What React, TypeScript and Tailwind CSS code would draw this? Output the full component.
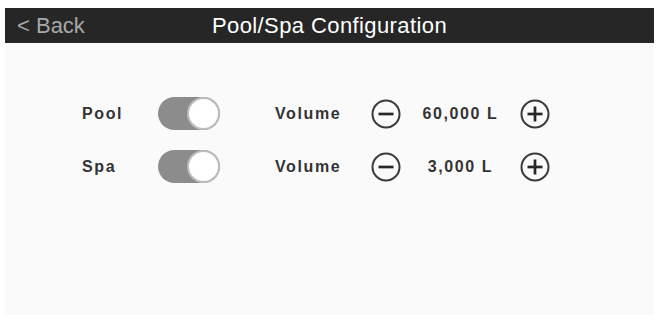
import React from 'react';

function Toggle() {
  return (
    <div className="relative w-[62px] h-[33px] rounded-full bg-[#8c8c8c]">
      <div className="absolute right-0 top-0 w-[33px] h-[33px] rounded-full bg-white border-2 border-[#bdbdbd]" />
    </div>
  );
}

function RoundBtn({ plus }: { plus?: boolean }) {
  return (
    <svg width="30" height="30" viewBox="0 0 30 30" className="shrink-0">
      <circle cx="15" cy="15" r="13.5" fill="none" stroke="#3a3a3a" strokeWidth="2" />
      <line x1="7.5" y1="15" x2="22.5" y2="15" stroke="#262626" strokeWidth="2.7" />
      {plus && <line x1="15" y1="7.5" x2="15" y2="22.5" stroke="#262626" strokeWidth="2.7" />}
    </svg>
  );
}

const rows = [
  { name: 'Pool', volume: '60,000 L' },
  { name: 'Spa', volume: '3,000 L' },
];

export default function App() {
  return (
    <div className="w-[659px] h-[315px] bg-white pt-[8px] px-[5px]" style={{ fontFamily: '"Liberation Sans", Arial, sans-serif' }}>
      <div className="h-[307px] w-[649px] bg-[#fafafa] flex flex-col">
        <div className="relative h-[35px] bg-[#262626] flex items-center justify-center">
          <span className="absolute left-[12px] text-[22px] text-[#a8a8a8]">&lt; Back</span>
          <span className="text-[22px] text-white tracking-[0.4px]">Pool/Spa Configuration</span>
        </div>

        <div className="mt-[54px] flex flex-col gap-[20px] pl-[77px] text-[#333] font-bold text-[16px] tracking-[1.6px]">
          {rows.map((r) => (
            <div key={r.name} className="flex items-center h-[33px]">
              <span className="w-[76px]">{r.name}</span>
              <div className="w-[117px]">
                <Toggle />
              </div>
              <span className="w-[96px]">Volume</span>
              <RoundBtn />
              <span className="w-[119px] text-center">{r.volume}</span>
              <RoundBtn plus />
            </div>
          ))}
        </div>
      </div>
    </div>
  );
}
